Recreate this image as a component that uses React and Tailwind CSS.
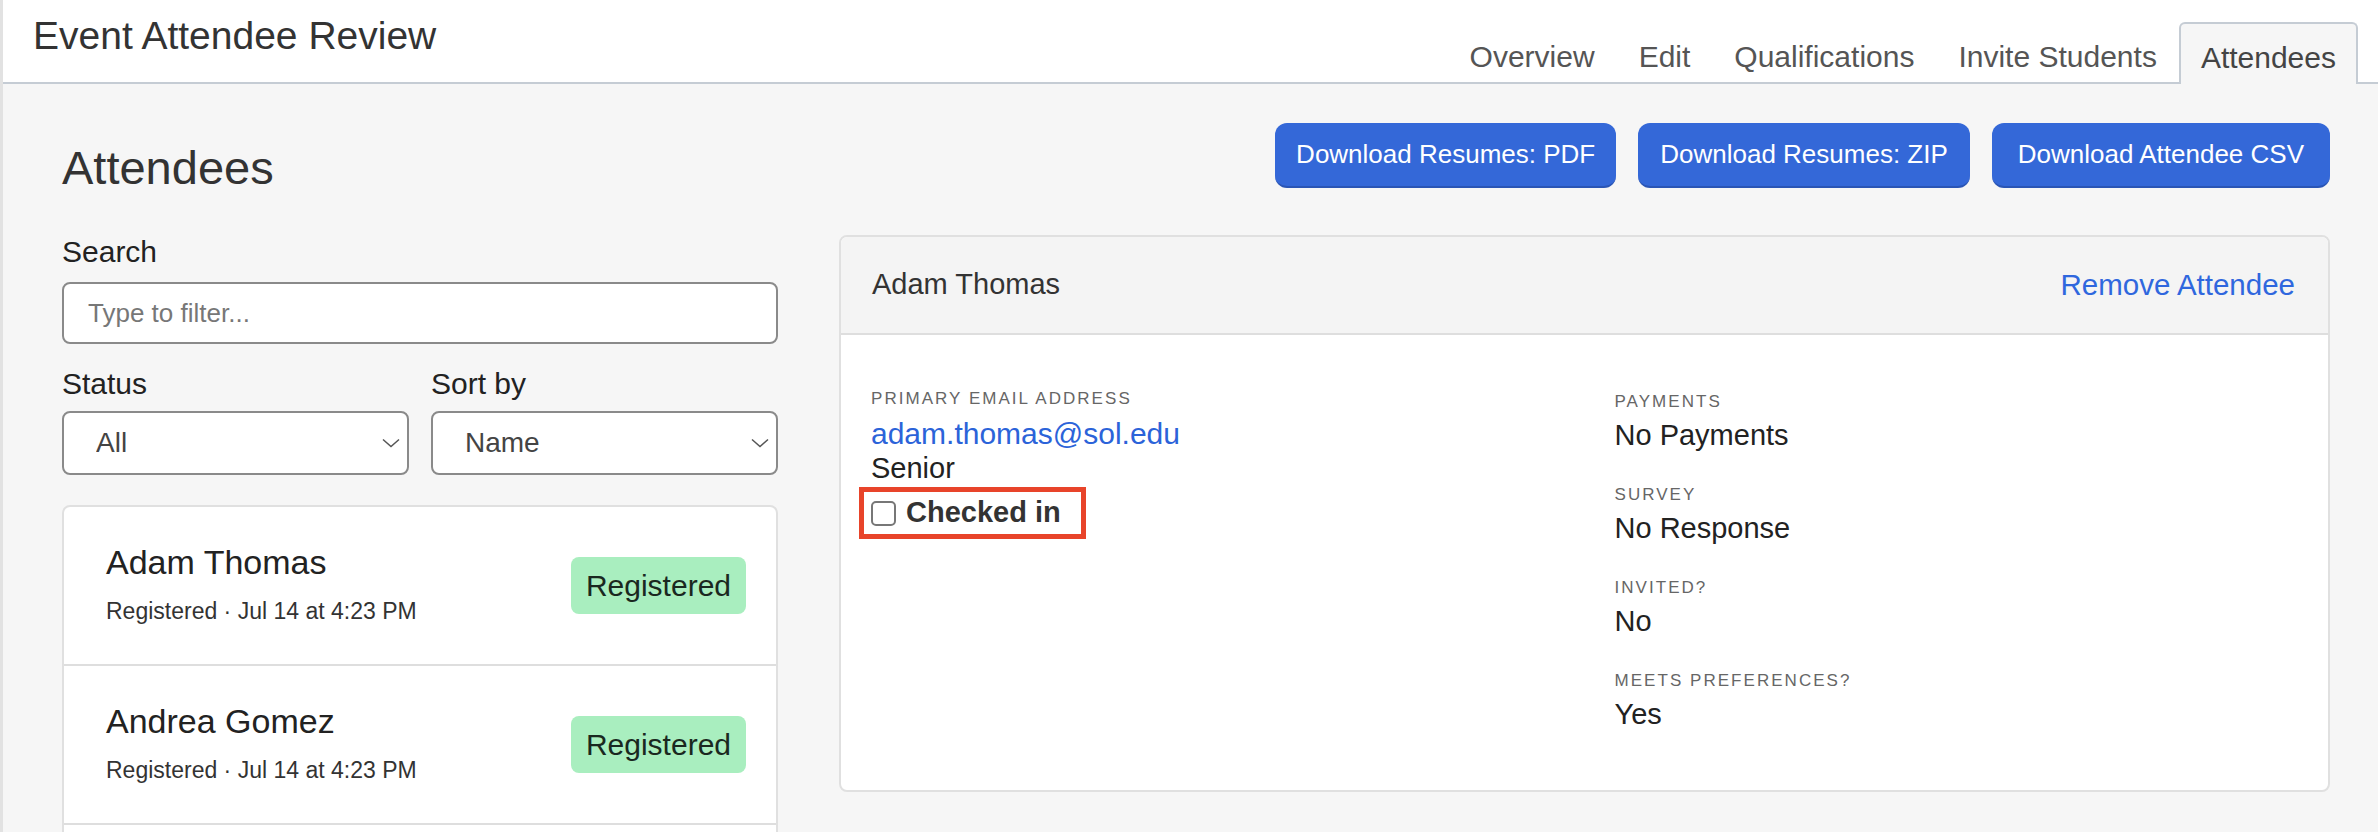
import React, { useState } from "react";

const tabs = ["Overview", "Edit", "Qualifications", "Invite Students", "Attendees"];

const attendees = [
  { id: 1, name: "Adam Thomas", status: "Registered", when: "Jul 14 at 4:23 PM" },
  { id: 2, name: "Andrea Gomez", status: "Registered", when: "Jul 14 at 4:23 PM" },
  { id: 3, name: "Brian Walsh", status: "Registered", when: "Jul 14 at 4:23 PM" },
];

const details = [
  { label: "Payments", value: "No Payments" },
  { label: "Survey", value: "No Response" },
  { label: "Invited?", value: "No" },
  { label: "Meets Preferences?", value: "Yes" },
];

const Chevron = () => (
  <svg
    width="18"
    height="10"
    viewBox="0 0 18 10"
    className="pointer-events-none absolute right-[9px] top-1/2 -translate-y-1/2"
  >
    <polyline points="1,1.5 9,8.5 17,1.5" fill="none" stroke="#555" strokeWidth="1.5" />
  </svg>
);

const Select = ({ value, options, onChange }) => (
  <div className="relative">
    <select
      value={value}
      onChange={(e) => onChange(e.target.value)}
      className="w-full h-[64px] appearance-none bg-white border-2 border-[#8a8a8a] rounded-[8px] pl-[32px] text-[28px] text-[#444] outline-none"
    >
      {options.map((o) => (
        <option key={o} value={o}>
          {o}
        </option>
      ))}
    </select>
    <Chevron />
  </div>
);

const App = () => {
  const [search, setSearch] = useState("");
  const [status, setStatus] = useState("All");
  const [sortBy, setSortBy] = useState("Name");
  const [checkedIn, setCheckedIn] = useState(false);
  const selected = attendees[0];

  return (
    <div className="min-h-screen bg-[#f6f6f6] border-l-[3px] border-[#e2e2e2] font-['Liberation_Sans',Arial,sans-serif] text-[#333]">
      {/* top bar with event tabs */}
      <header className="h-[84px] bg-white border-b-2 border-[#c5ccd4] flex justify-between items-end pr-[20px]">
        <h1 className="self-start pt-[13px] pl-[30px] text-[39px] leading-[46px] text-[#333]">
          Event Attendee Review
        </h1>
        <nav className="flex items-end -mb-[2px]">
          {tabs.map((t) =>
            t === "Attendees" ? (
              <span
                key={t}
                className="h-[62px] px-[20px] flex items-center pt-[6px] bg-[#f6f6f6] border-2 border-b-0 border-[#c5ccd4] rounded-t-[6px] text-[30px] text-[#444]"
              >
                {t}
              </span>
            ) : (
              <span
                key={t}
                className="h-[60px] px-[22px] flex items-center pt-[4px] text-[30px] text-[#555]"
              >
                {t}
              </span>
            )
          )}
        </nav>
      </header>

      <main className="pl-[59px] pr-[48px]">
        <div className="flex justify-between items-start">
          <h2 className="mt-[58px] text-[47px] leading-[52px] text-[#333]">Attendees</h2>
          <div className="flex gap-[22px] mt-[39px]">
            <button className="h-[65px] px-[21px] bg-[#3468d8] border-b-2 border-[#2a55b5] rounded-[12px] text-white text-[26px]">
              Download Resumes: PDF
            </button>
            <button className="h-[65px] px-[22px] bg-[#3468d8] border-b-2 border-[#2a55b5] rounded-[12px] text-white text-[26px]">
              Download Resumes: ZIP
            </button>
            <button className="h-[65px] px-[26px] bg-[#3468d8] border-b-2 border-[#2a55b5] rounded-[12px] text-white text-[26px]">
              Download Attendee CSV
            </button>
          </div>
        </div>

        <div className="flex gap-[61px] mt-[41px] items-start">
          {/* filters and list */}
          <section className="w-[716px] shrink-0">
            <label className="block text-[30px] leading-[34px] text-[#222] mb-[13px]">Search</label>
            <input
              type="text"
              value={search}
              onChange={(e) => setSearch(e.target.value)}
              placeholder="Type to filter..."
              className="w-full h-[62px] bg-white border-2 border-[#8a8a8a] rounded-[8px] px-[24px] text-[26px] placeholder-[#777] outline-none"
            />
            <div className="grid grid-cols-2 gap-[22px] mt-[23px]">
              <div>
                <label className="block text-[30px] leading-[34px] text-[#222] mb-[10px]">Status</label>
                <Select value={status} options={["All", "Registered", "Waitlisted"]} onChange={setStatus} />
              </div>
              <div>
                <label className="block text-[30px] leading-[34px] text-[#222] mb-[10px]">Sort by</label>
                <Select value={sortBy} options={["Name", "Date"]} onChange={setSortBy} />
              </div>
            </div>

            <ul className="mt-[30px] bg-white border-2 border-[#e0e0e0] rounded-[8px]">
              {attendees.map((a) => (
                <li
                  key={a.id}
                  className="h-[159px] flex items-center justify-between pl-[42px] pr-[30px] border-b-2 border-[#dedede]"
                >
                  <div>
                    <div className="text-[34px] leading-[38px] text-[#222]">{a.name}</div>
                    <div className="mt-[13px] text-[23px] text-[#333]">
                      {a.status} · {a.when}
                    </div>
                  </div>
                  <span className="h-[57px] px-[15px] flex items-center bg-[#a9eebf] rounded-[8px] text-[30px] text-[#1a2820]">
                    {a.status}
                  </span>
                </li>
              ))}
            </ul>
          </section>

          {/* selected attendee */}
          <section className="flex-1 bg-white border-2 border-[#e0e0e0] rounded-[8px] overflow-hidden">
            <div className="h-[98px] bg-[#f4f4f4] border-b-2 border-[#dedede] flex items-center justify-between pl-[31px] pr-[33px]">
              <span className="text-[29px] text-[#333]">{selected.name}</span>
              <button className="text-[29.5px] text-[#2f67de]">Remove Attendee</button>
            </div>
            <div className="grid grid-cols-2 gap-x-[60px] pl-[30px] pr-[30px] pt-[54px] pb-[58px]">
              <div>
                <div className="text-[17px] leading-[20px] tracking-[0.12em] uppercase text-[#666]">
                  Primary Email Address
                </div>
                <a href="#" className="block mt-[7px] text-[30px] leading-[35px] text-[#2b63d9]">
                  adam.thomas@sol.edu
                </a>
                <div className="text-[29px] leading-[35px] text-[#222]">Senior</div>
                <label className="inline-flex items-center gap-[10px] mt-[1px] -ml-[12px] pl-[7px] pr-[20px] h-[52px] border-[5px] border-[#e8442a] cursor-pointer">
                  <input
                    type="checkbox"
                    checked={checkedIn}
                    onChange={(e) => setCheckedIn(e.target.checked)}
                    className="appearance-none w-[25px] h-[25px] border-2 border-[#777] rounded-[5px] bg-white checked:bg-[#3468d8]"
                  />
                  <span className="text-[29px] font-bold text-[#333]">Checked in</span>
                </label>
              </div>
              <div className="flex flex-col gap-[32px] pt-[3px]">
                {details.map((d) => (
                  <div key={d.label}>
                    <div className="text-[17px] leading-[20px] tracking-[0.12em] uppercase text-[#666]">
                      {d.label}
                    </div>
                    <div className="mt-[6px] text-[29px] leading-[35px] text-[#222]">{d.value}</div>
                  </div>
                ))}
              </div>
            </div>
          </section>
        </div>
      </main>
    </div>
  );
};

export default App;
